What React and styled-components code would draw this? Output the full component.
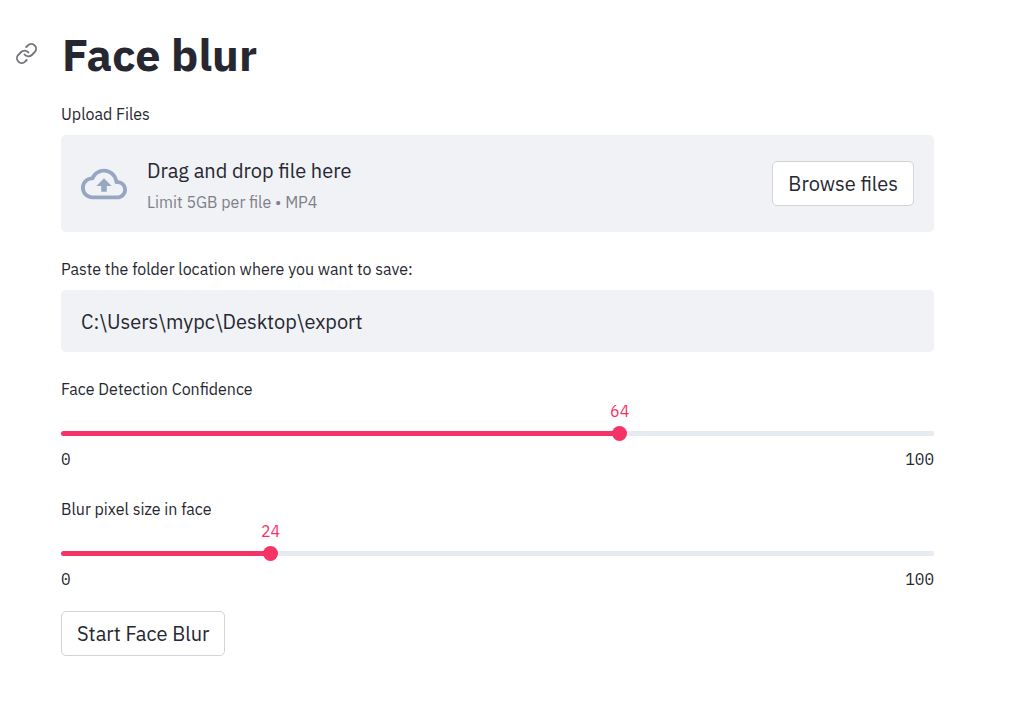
import React, { useId, useState } from 'react';
import styled, { createGlobalStyle } from 'styled-components';

const GlobalStyle = createGlobalStyle`
  *, *::before, *::after { box-sizing: border-box; }
  body {
    margin: 0;
    background: #ffffff;
    color: #262730;
    font-family: "IBM Plex Sans", Roboto, sans-serif;
    font-size: 20px;
    font-weight: 400;
    line-height: 32px;
  }
`;

const Page = styled.main`
  display: flex;
  flex-direction: column;
  padding: 24px 77px 60px 61px;
`;

const Header = styled.header`
  display: flex;
  align-items: center;
  gap: 24px;
  margin-left: -46px;
  margin-bottom: 20px;
`;

const AnchorLink = styled.a`
  display: flex;
  padding-bottom: 2px;
  color: #737379;
`;

const Title = styled.h1`
  margin: 0;
  font-size: 45px;
  line-height: 60px;
  font-weight: 700;
`;

const Field = styled.section`
  display: flex;
  flex-direction: column;
  margin-bottom: 27px;
`;

const Label = styled.label`
  font-size: 16px;
  line-height: 20px;
  margin-bottom: 11px;
`;

const DropZone = styled.div`
  display: flex;
  align-items: center;
  gap: 20px;
  min-height: 97px;
  padding: 0 20px;
  border-radius: 5px;
  background: #f0f2f6;
`;

const CloudIcon = styled.svg`
  flex: none;
  fill: #97a6c3;
`;

const DropText = styled.div`
  display: flex;
  flex: 1;
  flex-direction: column;
  gap: 5px;
`;

const Hint = styled.small`
  font-size: 16px;
  line-height: 20px;
  color: #7f8088;
`;

const Button = styled.button`
  align-self: ${({ $start }) => ($start ? 'flex-start' : 'center')};
  height: 45px;
  padding: 0 15px;
  border: 1px solid #d3d4d8;
  border-radius: 5px;
  background: #ffffff;
  color: inherit;
  font: inherit;
  line-height: 32px;
  cursor: pointer;
`;

const TextInput = styled.input`
  width: 100%;
  height: 62px;
  padding: 0 20px;
  border: 0;
  border-radius: 5px;
  background: #f0f2f6;
  color: inherit;
  font: inherit;
`;

const SliderField = styled.section`
  display: flex;
  flex-direction: column;
  margin-bottom: 20px;

  & + & {
    margin-top: 8px;
  }
`;

const ValueRow = styled.div`
  position: relative;
  height: 20px;
  margin-top: -9px;
`;

const SliderValue = styled.output`
  position: absolute;
  left: ${({ $value }) => $value}%;
  transform: translateX(-50%);
  color: #f63366;
  font-size: 16px;
  line-height: 20px;
`;

const Track = styled.div`
  display: flex;
  align-items: center;
  height: 5px;
  margin: 10px 0 11px;
  border-radius: 3px;
  background: linear-gradient(to right, #f63366 ${({ $value }) => $value}%, #e6eaf1 ${({ $value }) => $value}%);
`;

const Range = styled.input`
  appearance: none;
  flex: 1;
  height: 15px;
  margin: 0 -8px;
  background: transparent;
  cursor: pointer;

  &::-webkit-slider-thumb {
    appearance: none;
    width: 15px;
    height: 15px;
    border-radius: 50%;
    background: #f63366;
  }
`;

const Bounds = styled.div`
  display: flex;
  justify-content: space-between;
  font-family: "IBM Plex Mono", "Liberation Mono", monospace;
  font-size: 16px;
  line-height: 24px;
`;

function Slider({ label, initial }) {
  const id = useId();
  const [value, setValue] = useState(initial);
  return (
    <SliderField>
      <Label htmlFor={id}>{label}</Label>
      <ValueRow>
        <SliderValue htmlFor={id} $value={value}>{value}</SliderValue>
      </ValueRow>
      <Track $value={value}>
        <Range
          id={id}
          type="range"
          min="0"
          max="100"
          value={value}
          onChange={(e) => setValue(Number(e.target.value))}
        />
      </Track>
      <Bounds>
        <span>0</span>
        <span>100</span>
      </Bounds>
    </SliderField>
  );
}

export default function App() {
  const [folder, setFolder] = useState('C:\\Users\\mypc\\Desktop\\export');
  return (
    <>
      <GlobalStyle />
      <Page>
        <Header>
          <AnchorLink href="#face-blur" aria-label="Link to this heading">
            <svg width="23" height="23" viewBox="0 0 24 24" fill="none" stroke="currentColor" strokeWidth="2" strokeLinecap="round" strokeLinejoin="round">
              <path d="M10 13a5 5 0 0 0 7.54.54l3-3a5 5 0 0 0-7.07-7.07l-1.72 1.71" />
              <path d="M14 11a5 5 0 0 0-7.54-.54l-3 3a5 5 0 0 0 7.07 7.07l1.71-1.71" />
            </svg>
          </AnchorLink>
          <Title id="face-blur">Face blur</Title>
        </Header>

        <Field>
          <Label htmlFor="browse">Upload Files</Label>
          <DropZone>
            <CloudIcon width="46" height="46" viewBox="0 0 24 24" aria-hidden="true">
              <path d="M19.35 10.04C18.67 6.59 15.64 4 12 4 9.11 4 6.6 5.64 5.35 8.04 2.34 8.36 0 10.91 0 14c0 3.31 2.69 6 6 6h13c2.76 0 5-2.24 5-5 0-2.64-2.05-4.78-4.65-4.96zM19 18H6c-2.21 0-4-1.79-4-4 0-2.05 1.53-3.76 3.56-3.97l1.07-.11.5-.95C8.08 7.14 9.94 6 12 6c2.62 0 4.88 1.86 5.39 4.43l.3 1.5 1.53.11c1.56.1 2.78 1.41 2.78 2.96 0 1.65-1.35 3-3 3zM8 13h2.55v3h2.9v-3H16l-4-4z" />
            </CloudIcon>
            <DropText>
              <span>Drag and drop file here</span>
              <Hint>Limit 5GB per file • MP4</Hint>
            </DropText>
            <Button id="browse" type="button">Browse files</Button>
          </DropZone>
        </Field>

        <Field>
          <Label htmlFor="folder">Paste the folder location where you want to save:</Label>
          <TextInput id="folder" type="text" value={folder} onChange={(e) => setFolder(e.target.value)} />
        </Field>

        <Slider label="Face Detection Confidence" initial={64} />
        <Slider label="Blur pixel size in face" initial={24} />

        <Button type="button" $start>Start Face Blur</Button>
      </Page>
    </>
  );
}
